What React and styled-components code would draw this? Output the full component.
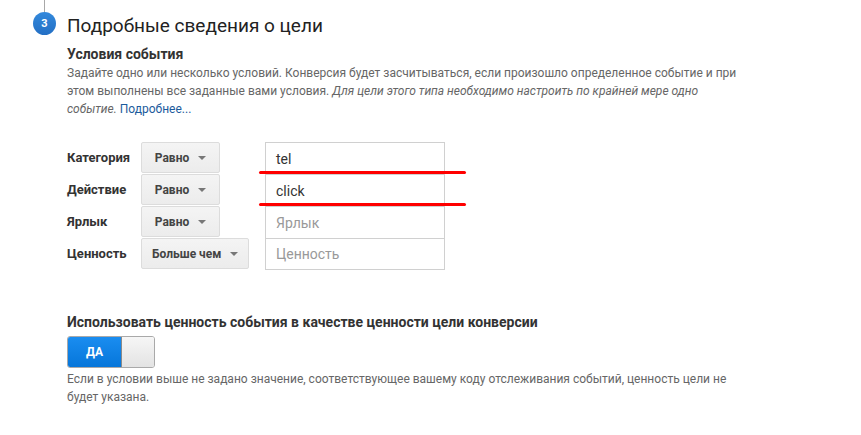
import styled, { createGlobalStyle } from "styled-components";

const GlobalStyle = createGlobalStyle`
  body {
    margin: 0;
    background: #fff;
    font-family: Roboto, "Noto Sans", Arial, sans-serif;
    color: #333;
  }
`;

const conditions = [
  { label: "Категория", op: "Равно", value: "tel" },
  { label: "Действие", op: "Равно", value: "click" },
  { label: "Ярлык", op: "Равно", placeholder: "Ярлык" },
  { label: "Ценность", op: "Больше чем", placeholder: "Ценность" },
];

const App = () => {
  return (
    <Page>
      <GlobalStyle />
      <Header>
        <Rail>
          <RailLine />
          <Badge>3</Badge>
        </Rail>
        <Title>Подробные сведения о цели</Title>
      </Header>

      <Body>
        <SubHeading>Условия события</SubHeading>
        <Help>
          Задайте одно или несколько условий. Конверсия будет засчитываться, если
          произошло определенное событие и при этом выполнены все заданные вами
          условия. <em>Для цели этого типа необходимо настроить по крайней мере одно
          событие.</em> <Link href="#">Подробнее...</Link>
        </Help>

        <Conditions>
          {conditions.map((c, i) => (
            <Row key={c.label}>
              <Label>{c.label}</Label>
              <OpButton>
                {c.op}
                <Caret />
              </OpButton>
              <Field $last={i === conditions.length - 1}>
                {c.value ? <Value>{c.value}</Value> : <Placeholder>{c.placeholder}</Placeholder>}
              </Field>
            </Row>
          ))}
          <Mark $top={29} />
          <Mark $top={61} />
        </Conditions>

        <SubHeading $spaced>Использовать ценность события в качестве ценности цели конверсии</SubHeading>
        <Toggle>
          <ToggleOn>ДА</ToggleOn>
          <ToggleKnob />
        </Toggle>
        <Note>
          Если в условии выше не задано значение, соответствующее вашему коду
          отслеживания событий, ценность цели не будет указана.
        </Note>
      </Body>
    </Page>
  );
};

const Page = styled.div`
  padding-left: 33px;
`;

const Header = styled.div`
  display: flex;
  align-items: flex-start;
  gap: 11px;
`;

const Rail = styled.div`
  display: flex;
  flex-direction: column;
  align-items: center;
  width: 23px;
`;

const RailLine = styled.div`
  width: 1px;
  height: 12px;
  background: #a8a8a8;
`;

const Badge = styled.div`
  width: 23px;
  height: 23px;
  border-radius: 50%;
  background: linear-gradient(#3389dc, #236fc4);
  color: #fff;
  font-size: 11px;
  font-weight: 700;
  display: flex;
  align-items: center;
  justify-content: center;
`;

const Title = styled.h1`
  margin: 14px 0 0;
  font-size: 19px;
  line-height: 24px;
  font-weight: 400;
  color: #222;
`;

const Body = styled.div`
  padding-left: 34px;
  width: 680px;
`;

const SubHeading = styled.h2`
  margin: ${(p) => (p.$spaced ? "43px" : "7px")} 0 0;
  font-size: 14px;
  line-height: 18px;
  font-weight: 700;
  color: #333;
`;

const Help = styled.p`
  margin: 1px 0 0;
  font-size: 12px;
  line-height: 18px;
  color: #666;

  em {
    font-style: italic;
  }
`;

const Link = styled.a`
  color: #1c5b9c;
  text-decoration: none;
`;

const Conditions = styled.div`
  position: relative;
  margin-top: 24px;
  display: grid;
  grid-auto-rows: 32px;
`;

const Row = styled.div`
  display: grid;
  grid-template-columns: 74px 124px 180px;
  align-items: start;
`;

const Label = styled.span`
  font-size: 13px;
  font-weight: 700;
  color: #333;
  line-height: 31px;
`;

const OpButton = styled.div`
  justify-self: start;
  display: flex;
  align-items: center;
  justify-content: center;
  gap: 9px;
  min-width: 79px;
  height: 31px;
  padding: 0 10px;
  box-sizing: border-box;
  border: 1px solid #dcdcdc;
  border-radius: 2px;
  background: linear-gradient(#f4f4f4, #ececec);
  font-size: 12px;
  font-weight: 700;
  color: #444;
`;

const Caret = styled.span`
  width: 0;
  height: 0;
  border-left: 4px solid transparent;
  border-right: 4px solid transparent;
  border-top: 4px solid #777;
`;

const Field = styled.div`
  height: ${(p) => (p.$last ? "32px" : "33px")};
  box-sizing: border-box;
  border: 1px solid #d0d0d0;
  padding: 0 10px;
  display: flex;
  align-items: center;
  font-size: 14px;
`;

const Value = styled.span`
  color: #333;
`;

const Placeholder = styled.span`
  color: #999;
`;

const Mark = styled.div`
  position: absolute;
  left: 192px;
  top: ${(p) => p.$top}px;
  width: 207px;
  height: 3px;
  border-radius: 2px;
  background: #f00;
`;

const Toggle = styled.div`
  margin-top: 5px;
  display: flex;
  width: 88px;
  height: 32px;
  border-radius: 3px;
  overflow: hidden;
  border: 1px solid #a9a9a9;
  box-sizing: border-box;
`;

const ToggleOn = styled.div`
  width: 53px;
  display: flex;
  align-items: center;
  justify-content: center;
  background: linear-gradient(#1a8df0, #0676da);
  color: #fff;
  font-size: 12px;
  font-weight: 700;
  border-right: 1px solid #8a8a8a;
`;

const ToggleKnob = styled.div`
  flex: 1;
  background: linear-gradient(#f6f6f6, #e3e3e3);
`;

const Note = styled.p`
  margin: 2px 0 0;
  font-size: 12px;
  line-height: 18px;
  color: #666;
`;

export default App;
